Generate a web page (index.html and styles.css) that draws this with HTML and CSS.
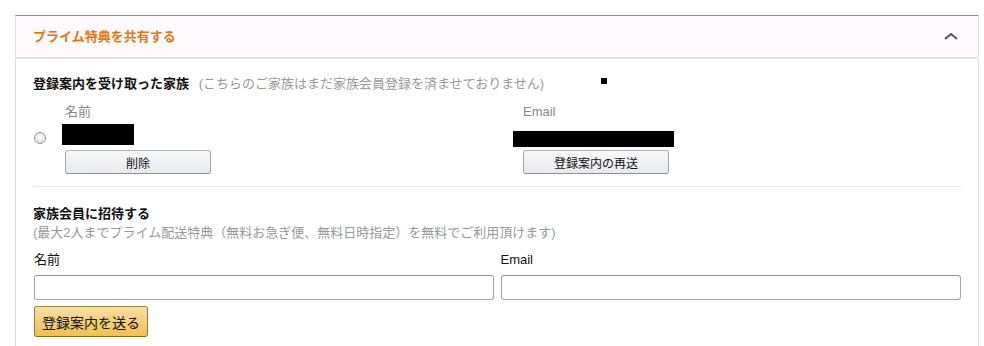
FILE: index.html
```html
<!DOCTYPE html>
<html lang="ja">
<head>
  <meta charset="UTF-8">
  <title>プライム特典を共有する</title>
  <link rel="stylesheet" href="styles.css">
</head>
<body>
  <div class="share">
    <div class="share-head">
      <span class="share-title">プライム特典を共有する</span>
      <svg class="chevron" width="14" height="8" viewBox="0 0 14 8">
        <path d="M1 7 L7 2 L13 7" fill="none" stroke="#4d5560" stroke-width="2"/>
      </svg>
    </div>
    <div class="share-body">
      <div class="heading">
        <b>登録案内を受け取った家族</b>
        <span class="muted">(こちらのご家族はまだ家族会員登録を済ませておりません)</span>
        <i class="dot"></i>
      </div>

      <div class="member">
        <span class="label name-col">名前</span>
        <span class="label mail-col">Email</span>
        <span class="radio"></span>
        <span class="hidden-name"></span>
        <span class="hidden-mail"></span>
        <button class="btn name-col">削除</button>
        <button class="btn mail-col">登録案内の再送</button>
      </div>

      <hr class="sep">

      <div class="heading invite">
        <b>家族会員に招待する</b>
        <div class="muted">(最大2人までプライム配送特典（無料お急ぎ便、無料日時指定）を無料でご利用頂けます)</div>
      </div>

      <div class="fields">
        <label class="field">名前<input type="text"></label>
        <label class="field">Email<input type="text"></label>
      </div>
      <button class="btn-primary">登録案内を送る</button>
    </div>
  </div>
</body>
</html>
```
FILE: styles.css
```css
* {margin: 0; padding: 0; box-sizing: border-box;}
body{
  background: #fff;
  font-family: "Liberation Sans", "Noto Sans CJK JP", sans-serif;
  font-size: 13px;
  color: #111;
  padding: 15px 5px 0 15px;
}
.share {
  width: 964px;
}
.share-head {
  height: 42px;
  background: #fdf9fd;
  border-top: 1px solid #e47911;
  border-left: 1px solid #e3e3e3;
  border-right: 1px solid #e3e3e3;
  display: flex;
  align-items: center;
  justify-content: space-between;
  padding: 0 20px 2px 17px;
}
.share-title {
  color: #e47911;
  font-weight: bold;
}
.share-body {
  border: 1px solid #ddd;
  border-top: 2px solid #e3e1e4;
  border-radius: 0 3px 0 0;
  padding: 15px 17px 20px 17px;
}
.heading {
  line-height: 19px;
}
.muted {
  color: #999;
}
.heading .muted {
  margin-left: 6px;
}
.invite .muted {
  margin-left: 0;
}
.dot {
  display: inline-block;
  width: 6px;
  height: 6px;
  background: #000;
  margin-left: 53px;
  vertical-align: 4px;
}
.member {
  display: grid;
  grid-template-columns: 29px 451px 1fr;
  grid-template-rows: 18px 22px 24px;
  row-gap: 3px;
  margin-top: 10px;
}
.member .btn {
  margin-top: 1px;
}
.label {
  color: #888;
  line-height: 18px;
}
.name-col {
  grid-column: 2;
  margin-left: 3px;
}
.mail-col {
  grid-column: 3;
  margin-left: 10px;
}
.label.name-col, .label.mail-col {
  grid-row: 1;
}
.radio {
  grid-row: 2;
  grid-column: 1;
  align-self: center;
  width: 12px;
  height: 12px;
  border-radius: 50%;
  border: 1px solid #9a9a9a;
  background: radial-gradient(circle at 50% 40%, #fff 0, #e9e9e9 55%, #cfcfcf 100%);
  margin: 5px 0 0 1px;
}
.hidden-name {
  grid-row: 2;
  grid-column: 2;
  width: 72px;
  height: 21px;
  background: #000;
}
.hidden-mail {
  grid-row: 2;
  grid-column: 3;
  align-self: end;
  width: 161px;
  height: 16px;
  margin-bottom: -1px;
  background: #000;
}
.btn {
  grid-row: 3;
  width: 146px;
  height: 24px;
  font-family: inherit;
  font-size: 12px;
  color: #111;
  background: linear-gradient(#f7f8fa, #e7e9ec);
  border: 1px solid #adb1b8;
  border-color: #adb1b8 #a2a6ac #8d9096;
  border-radius: 3px;
  cursor: pointer;
}
.sep {
  border: 0;
  border-top: 1px solid #e7e7e7;
  margin: 13px 0 17px;
}
.fields {
  display: grid;
  grid-template-columns: 1fr 1fr;
  column-gap: 7px;
  margin-top: 9px;
}
.field {
  display: flex;
  flex-direction: column;
  line-height: 18px;
  padding-left: 1px;
}
.field:last-child {
  padding-left: 0;
}
.field input {
  margin-top: 6px;
  height: 25px;
  border: 1px solid #a6a6a6;
  border-top-color: #949494;
  border-radius: 3px;
  font-size: 13px;
}
.btn-primary {
  margin: 6px 0 0 1px;
  width: 114px;
  height: 31px;
  font-family: inherit;
  font-size: 14px;
  color: #111;
  background: linear-gradient(#f7dfa5, #f0c14b);
  border: 1px solid #a88734;
  border-color: #a88734 #9c7e31 #846a29;
  border-radius: 3px;
  cursor: pointer;
}
```
